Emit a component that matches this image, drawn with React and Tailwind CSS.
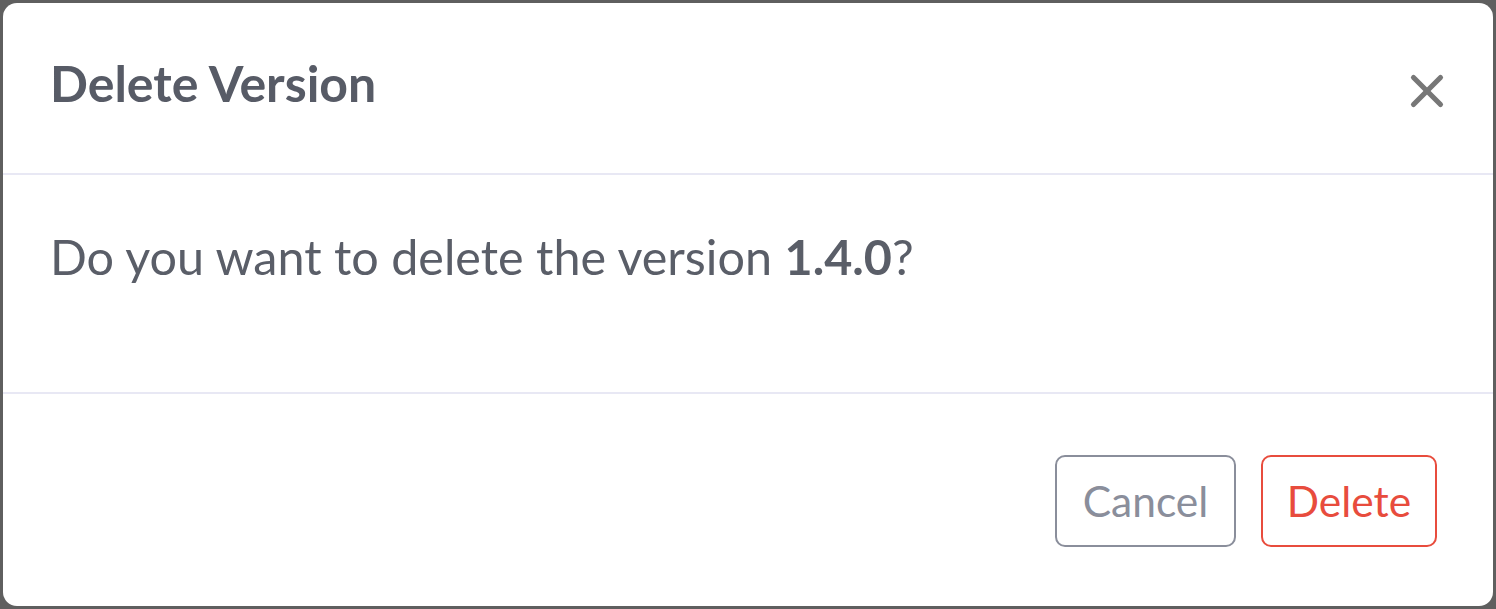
import { X } from 'lucide-react';

const font = { fontFamily: 'Lato, "Noto Sans", sans-serif' };

const DeleteVersionModal = ({ version }) => {
    return (
        <div className="flex h-full flex-col overflow-hidden rounded-[14px] bg-white" style={font}>
            <div className="flex h-[170px] items-center justify-between pl-[47px] pr-[39px]">
                <h3 className="mt-[-10px] text-[50px] font-bold leading-none text-[#575b66]">Delete Version</h3>
                <button className="mt-[6px] flex h-[54px] w-[54px] items-center justify-center text-[#777777]">
                    <X size={54} strokeWidth={2.3} />
                </button>
            </div>
            <div className="h-[2px] bg-[#e8e8f4]" />
            <div className="h-[217px] px-[47px] pt-[53px]">
                <p className="text-[48.5px] leading-[56px] text-[#5a5e68]">
                    Do you want to delete the version <span className="font-bold">{version}</span>?
                </p>
            </div>
            <div className="h-[2px] bg-[#e8e8f4]" />
            <div className="flex flex-1 items-center justify-end gap-[25px] pr-[56px] pt-[2px]">
                <button className="h-[92px] w-[181px] rounded-[10px] border-[2.5px] border-[#8a8e9b] text-[42.5px] text-[#8a8e9b]">
                    Cancel
                </button>
                <button className="h-[92px] w-[176px] rounded-[10px] border-[2.5px] border-[#e84c3d] text-[42.5px] text-[#e84c3d]">
                    Delete
                </button>
            </div>
        </div>
    );
};

export default function App() {
    return (
        <div className="h-[609px] w-[1496px] bg-[#5f5f5f] p-[3px]">
            <DeleteVersionModal version="1.4.0" />
        </div>
    );
}
